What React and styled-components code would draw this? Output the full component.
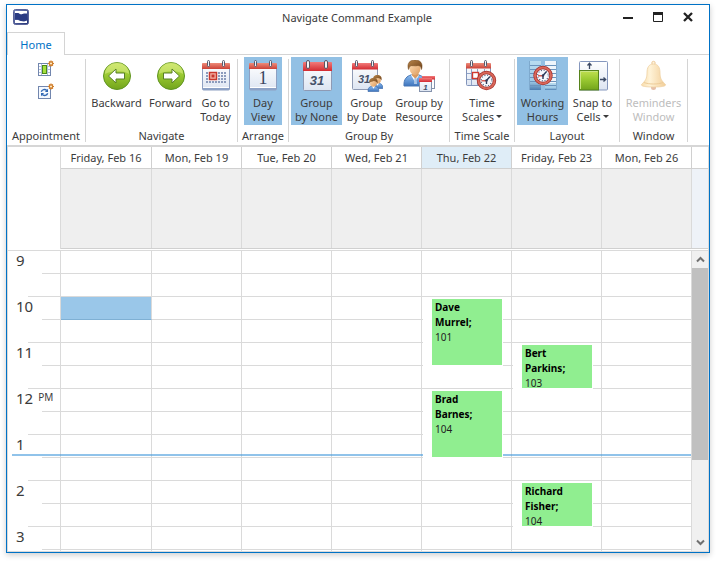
import React, { useState } from 'react';
import styled, { createGlobalStyle } from 'styled-components';

const GlobalStyle = createGlobalStyle`
    * {
        box-sizing: border-box;
    }

    body {
        margin: 0;
        background: #fff;
        color: #3b3b3b;
        font-family: "Noto Sans", "Open Sans", sans-serif;
        font-size: 11px;
    }

    button {
        font: inherit;
        color: inherit;
        border: 0;
        margin: 0;
        padding: 0;
        background: none;
    }

    svg {
        display: block;
        flex: none;
    }`;

const Page = styled.div`
        display: flex;
        height: 100vh;
        padding: 4px 6px 8px;`;

const Window = styled.main`
        display: flex;
        flex-direction: column;
        flex: 1;
        min-width: 0;
        background: #fff;
        border: 1px solid #0072c6;
        box-shadow: 0 2px 6px rgba(0, 0, 0, 0.2);`;

const TitleBar = styled.header`
        display: grid;
        grid-template-columns: 84px 1fr 92px;
        align-items: center;
        height: 27px;
        padding: 0 0 3px 6px;`;

const Title = styled.h1`
        margin: 0;
        font-size: 11px;
        font-weight: 400;
        text-align: center;`;

const WindowButtons = styled.div`
        display: flex;
        align-self: start;
        justify-content: flex-end;
        gap: 10px;
        padding: 2px 11px 0 0;`;

const WindowButton = styled.button`
        display: flex;
        align-items: center;
        justify-content: center;
        width: 20px;
        height: 20px;`;

const Tabs = styled.nav`
        display: flex;
        height: 23px;

        &::after {
        content: "";
        flex: 1;
        border-bottom: 1px solid #d4d4d4;
        }`;

const Tab = styled.button`
        width: 58px;
        border: 1px solid #d4d4d4;
        border-bottom: 0;
        color: #0072c6;`;

const Ribbon = styled.div`
        display: flex;
        height: 92px;
        padding-top: 2px;
        border-bottom: 2px solid #d6d6d6;`;

const Group = styled.section`
        display: flex;
        flex-direction: column;
        align-items: center;
        width: ${({ $width }) => $width}px;`;

const GroupItems = styled.div`
        display: flex;
        flex-direction: ${({ $stacked }) => ($stacked ? 'column' : 'row')};
        height: 71px;`;

const GroupTitle = styled.h2`
        margin: 0;
        font-size: 11px;
        font-weight: 400;
        line-height: 16px;
        white-space: nowrap;`;

const Separator = styled.div`
        width: 1px;
        margin: 2px 0 3px;
        background: #d4d4d4;`;

const LargeButton = styled.button`
        display: flex;
        flex-direction: column;
        align-items: center;
        gap: 4px;
        width: ${({ $width }) => $width}px;
        height: 68px;
        padding-top: 3px;
        line-height: 14px;
        white-space: nowrap;
        background: ${({ $active }) => ($active ? '#92c0e4' : 'transparent')};

        &:disabled {
        color: #bdbdbd;
        }`;

const SmallButton = styled.button`
        display: flex;
        justify-content: center;
        width: 22px;
        height: 23px;
        padding-top: 3px;`;

const Caret = styled.span`
        display: inline-block;
        margin-left: 2px;
        vertical-align: 3px;
        border: 3px solid transparent;
        border-top-color: #3b3b3b;
        border-bottom: 0;`;

const Scheduler = styled.section`
        display: flex;
        flex-direction: column;
        flex: 1;
        min-height: 0;
        border: 1px solid #dadada;
        border-top: 0;`;

const HeaderArea = styled.div`
        display: flex;
        padding-bottom: 1px;
        border-bottom: 1px solid #dadada;`;

const HeaderRows = styled.div`
        flex: 1;
        min-width: 0;`;

const Row = styled.div`
        display: flex;
        border-bottom: 1px solid #d0d0d0;`;

const Corner = styled.div`
        width: 53px;
        flex: none;
        border-right: 1px solid #dadada;`;

const DayHeader = styled.div`
        flex: 1 1 ${({ $first }) => ($first ? 2 : 1)}px;
        min-width: 0;
        height: 21px;
        line-height: 22px;
        text-align: center;
        white-space: nowrap;
        border-right: 1px solid #d0d0d0;
        background: ${({ $today }) => ($today ? '#dfedf7' : '#fff')};`;

const AllDayCell = styled.div`
        flex: 1 1 ${({ $first }) => ($first ? 2 : 1)}px;
        min-width: 0;
        height: 79px;
        border-right: 1px solid #dadada;
        background: #efefef;`;

const RowEnd = styled.div`
        width: 16px;
        flex: none;
        background: ${({ $shaded }) => ($shaded ? '#eef2f8' : '#fff')};`;

const Body = styled.div`
        display: flex;
        flex: 1;
        min-height: 0;`;

const TimeGrid = styled.div`
        position: relative;
        display: flex;
        flex: 1;
        min-width: 0;
        overflow: hidden;`;

const Ruler = styled.div`
        width: 53px;
        flex: none;
        border-right: 1px solid #dadada;`;

const Hour = styled.div`
        display: flex;
        gap: 5px;
        height: 46px;
        padding-left: 8px;
        line-height: 18px;
        font-size: 15px;
        background:
        linear-gradient(#dadada, #dadada) right 22px / 18px 1px no-repeat,
        linear-gradient(#dadada, #dadada) right 45px / 32px 1px no-repeat;`;

const Meridiem = styled.span`
        font-size: 10px;
        line-height: 16px;`;

const Day = styled.div`
        display: grid;
        grid-template-columns: minmax(0, 1fr);
        grid-auto-rows: 23px;
        align-content: start;
        flex: 1 1 ${({ $first }) => ($first ? 2 : 1)}px;
        min-width: 0;`;

const Slot = styled.div`
        grid-column: 1;
        grid-row: ${({ $row }) => $row};
        border-right: 1px solid #dadada;
        border-bottom: 1px solid ${({ $selected }) => ($selected ? '#7fb0d4' : '#dadada')};
        background: ${({ $selected }) => ($selected ? '#9ac7e9' : 'transparent')};`;

const Appointment = styled.article`
        grid-column: 1;
        grid-row: ${({ $row, $span }) => `${$row} / span ${$span}`};
        z-index: 2;
        margin: 0 9px 0 1px;
        padding: 2px 1px 1px 9px;
        background: #fff;`;

const AppointmentBody = styled.div`
        height: 100%;
        padding: 1px 3px 0;
        overflow: hidden;
        font-size: 10px;
        line-height: 15px;
        color: #222;
        background: #90ee90;

        strong {
        display: block;
        color: #000;
        }`;

const NowLine = styled.div`
        position: absolute;
        z-index: 1;
        top: 203px;
        left: 4px;
        right: 1px;
        height: 2px;
        background: rgba(70, 155, 220, 0.6);`;

const ScrollBar = styled.div`
        display: flex;
        flex-direction: column;
        width: 16px;
        flex: none;
        background: #f0f0f0;`;

const ScrollButton = styled.button`
        display: flex;
        align-items: center;
        justify-content: center;
        height: 17px;
        flex: none;`;

const ScrollTrack = styled.div`
        flex: 1;`;

const ScrollThumb = styled.div`
        height: 72%;
        background: #c0c0c0;`;

const Icon = ({ size = 32, children }) => (
    <svg width={size} height={size} viewBox={`0 0 ${size} ${size}`} aria-hidden="true">{children}</svg>
);

const Defs = styled.svg`
        position: absolute;`;

const IconColors = () => (
    <Defs width="0" height="0" aria-hidden="true">
        <defs>
            <linearGradient id="green" x1="0" y1="0" x2="0" y2="1">
                <stop offset="0" stopColor="#c3e052" />
                <stop offset="0.45" stopColor="#9bca32" />
                <stop offset="1" stopColor="#72a41c" />
            </linearGradient>
            <linearGradient id="red" x1="0" y1="0" x2="0" y2="1">
                <stop offset="0" stopColor="#ee8b79" />
                <stop offset="1" stopColor="#cb4137" />
            </linearGradient>
            <linearGradient id="brightRed" x1="0" y1="0" x2="0" y2="1">
                <stop offset="0" stopColor="#f27b7a" />
                <stop offset="1" stopColor="#d32a31" />
            </linearGradient>
            <linearGradient id="paper" x1="0" y1="0" x2="0" y2="1">
                <stop offset="0" stopColor="#ffffff" />
                <stop offset="1" stopColor="#dde5f2" />
            </linearGradient>
            <linearGradient id="sheet" x1="0" y1="0" x2="0" y2="1">
                <stop offset="0" stopColor="#b9dcf0" />
                <stop offset="0.7" stopColor="#a0cae6" />
                <stop offset="1" stopColor="#4c7db0" />
            </linearGradient>
            <linearGradient id="shirt" x1="0" y1="0" x2="0" y2="1">
                <stop offset="0" stopColor="#8dbdf0" />
                <stop offset="1" stopColor="#3d74bd" />
            </linearGradient>
            <linearGradient id="skin" x1="0" y1="0" x2="1" y2="1">
                <stop offset="0" stopColor="#ffe0b8" />
                <stop offset="1" stopColor="#dc9a5c" />
            </linearGradient>
            <linearGradient id="hair" x1="0" y1="0" x2="1" y2="1">
                <stop offset="0" stopColor="#b98549" />
                <stop offset="1" stopColor="#6d4119" />
            </linearGradient>
            <linearGradient id="bell" x1="0" y1="0" x2="1" y2="0">
                <stop offset="0" stopColor="#f8dcaa" />
                <stop offset="0.35" stopColor="#fff3d8" />
                <stop offset="1" stopColor="#f2ce98" />
            </linearGradient>
            <linearGradient id="navy" x1="0" y1="0" x2="1" y2="1">
                <stop offset="0" stopColor="#7d89bb" />
                <stop offset="1" stopColor="#1d2e74" />
            </linearGradient>
        </defs>
    </Defs>
);

const AppIcon = () => (
    <Icon size={16}>
        <rect x="0.5" y="0.5" width="15" height="15" rx="2" fill="url(#navy)" stroke="#59639a" />
        <path d="M2 2H14V5H10L8 6L5 4H2z" fill="#fff" />
        <path d="M2 11H5L8 12H11L14 11V14H2z" fill="#fff" />
        <path d="M2 4H5L8 5.500L11 4.500H14V11.500L11 12.500L8 12L5 10.500H2z" fill="#2a3b83" />
    </Icon>
);

const Spark = () => (
    <g stroke="#d07e2c" strokeWidth="1.200">
        <path d="M13 0.500V6.500M10 3.500H16M11 1.500L15 5.500M15 1.500L11 5.500" />
        <circle cx="13" cy="3.500" r="1.700" fill="#fdecc8" />
    </g>
);

const NewAppointmentIcon = () => (
    <Icon size={16}>
        <rect x="0.5" y="3.500" width="12" height="12" fill="#fff" stroke="#7286ae" />
        <path d="M1 6.500H12M1 9.500H12M1 12.500H12M3.500 4V15M9.500 4V15" stroke="#b3c0d8" />
        <rect x="4.500" y="5.500" width="4" height="8" fill="#a4df3c" stroke="#4b8a18" />
        <Spark />
    </Icon>
);

const RecurringIcon = () => (
    <Icon size={16}>
        <rect x="0.5" y="3.500" width="12" height="12" fill="#f5f9ff" stroke="#7286ae" />
        <path d="M3.300 8.800C4 6.600 7 5.800 8.800 7.500M9.700 10.200C9 12.500 6 13.200 4.200 11.500" fill="none" stroke="#2f67b4" strokeWidth="1.400" />
        <path d="M10 5.800V9H6.900zM3 13.200V10H6.100z" fill="#2f67b4" />
        <Spark />
    </Icon>
);

const ArrowIcon = ({ forward }) => (
    <Icon>
        <circle cx="16" cy="16" r="13.500" fill="url(#green)" stroke="#5f9420" />
        <path d="M4 14A12 11.500 0 0 1 28 14C22 10 10 11 4 14z" fill="#e4f49a" opacity="0.45" />
        <path
            d="M7.500 16L15 9V13H23.500V19H15V23z"
            fill="#fff"
            stroke="#587f28"
            strokeLinejoin="round"
            transform={forward ? 'rotate(180 16 16)' : undefined}
        />
    </Icon>
);

const Rings = ({ at }) => at.map(x => (
    <rect key={x} x={x - 1} y="0.5" width="2" height="6" rx="1" fill="#f3f3f7" stroke="#555a6c" />
));

const Sheet = () => (
    <>
        <rect x="2.500" y="3.500" width="27" height="26.500" rx="1" fill="url(#paper)" stroke="#8ea0c2" />
        <path d="M2 9V4a1 1 0 0 1 1-1H29a1 1 0 0 1 1 1V9z" fill="url(#red)" />
        <path d="M3 27.500H29V30H3z" fill="#8da2c6" />
        <path d="M3 27.500H29" stroke="#fff" />
        <Rings at={[8.5, 23.5]} />
    </>
);

const TodayIcon = () => (
    <Icon>
        <Sheet />
        <path d="M6 13H27M6 16H27M6 19H27M6 22H27" stroke="#8c9cbd" strokeWidth="2" strokeDasharray="2 1" />
        <rect x="8" y="11" width="10" height="10" fill="#f8fafd" />
        <rect x="9.500" y="12.500" width="7" height="7" fill="#f4b5a8" stroke="#c8372d" strokeWidth="1.500" />
        <rect x="11.500" y="14.500" width="3" height="3" fill="#c8372d" />
    </Icon>
);

const DayIcon = () => (
    <Icon>
        <Sheet />
        <text x="16" y="24" textAnchor="middle" fontFamily="Liberation Serif, serif" fontSize="18" fill="#3a4560">1</text>
    </Icon>
);

const MonthIcon = () => (
    <Icon>
        <rect x="2.500" y="2.500" width="28" height="28" rx="1" fill="url(#paper)" stroke="#8e9ab4" />
        <path d="M2 11V3a1 1 0 0 1 1-1H30a1 1 0 0 1 1 1V11z" fill="url(#brightRed)" />
        <rect x="5.500" y="0.500" width="3" height="8" rx="1.500" fill="#f6f6f8" stroke="#5b5360" />
        <rect x="23.500" y="0.500" width="3" height="8" rx="1.500" fill="#f6f6f8" stroke="#5b5360" />
        <text x="16" y="25" textAnchor="middle" fontFamily="Liberation Sans, sans-serif" fontSize="13" fontWeight="700" fontStyle="italic" fill="#46526a">31</text>
    </Icon>
);

const SmallPerson = () => (
    <>
        <path d="M0 14C0 10.500 2.500 9 6 9S12 10.500 12 14V15H0z" fill="url(#shirt)" stroke="#3a68a8" strokeWidth="0.700" />
        <path d="M4.500 9L6 12L8 9z" fill="#fff" />
        <ellipse cx="6" cy="5.500" rx="3.800" ry="4.200" fill="url(#skin)" />
        <path d="M1.500 6C0.500 1.500 3 0 6 0S11.500 1.500 10.500 6C9.500 3.500 8 3.500 6.500 3.200C4.500 4.300 2.500 3.500 1.500 6z" fill="url(#hair)" />
    </>
);

const ByDateIcon = () => (
    <Icon>
        <rect x="1.500" y="3.500" width="25" height="26" rx="1" fill="url(#paper)" stroke="#8e9ab4" />
        <path d="M1 9.500V4a1 1 0 0 1 1-1H26a1 1 0 0 1 1 1V9.500z" fill="url(#brightRed)" />
        <Rings at={[5.5, 21.5]} />
        <text x="13" y="23" textAnchor="middle" fontFamily="Liberation Sans, sans-serif" fontSize="11" fontWeight="700" fontStyle="italic" fill="#46526a">31</text>
        <g transform="translate(21 15) scale(0.9)"><SmallPerson /></g>
        <g transform="translate(17 18) scale(0.9)"><SmallPerson /></g>
    </Icon>
);

const ByResourceIcon = () => (
    <Icon>
        <path d="M1 26C0.500 19 4 16 8 15H16C20 16 22 19 22 26z" fill="url(#shirt)" stroke="#4776b5" />
        <path d="M8 15L12 22L16 15z" fill="#fff" />
        <path d="M11.500 17H13.500L14 24H11z" fill="#a9c4e6" />
        <path d="M9 12H15.500V15.500L12.200 18.500L9 15.500z" fill="#d99a5e" />
        <ellipse cx="12" cy="8.500" rx="5.500" ry="6.500" fill="url(#skin)" />
        <path d="M5.500 9.500C3.500 3 7 0 12 0S20.500 3 18.500 9.500C18 7 17 5.500 15 5.500C12 6.500 8.500 5 7.200 6C6.400 7 6.200 8 5.500 9.500z" fill="url(#hair)" stroke="#704419" strokeWidth="0.500" />
        <rect x="19.500" y="16.500" width="12" height="12" fill="#fff" stroke="#8593ad" />
        <path d="M19 16H32V19.500H19z" fill="url(#brightRed)" />
        <rect x="16.500" y="18.500" width="12" height="13" fill="url(#paper)" stroke="#8593ad" />
        <path d="M16 18H29V22H16z" fill="url(#brightRed)" />
        <text x="22.500" y="30" textAnchor="middle" fontFamily="Liberation Sans, sans-serif" fontSize="8" fontWeight="700" fontStyle="italic" fill="#3f4d68">1</text>
    </Icon>
);

const Clock = ({ x, y }) => (
    <g transform={`translate(${x} ${y})`}>
        <circle r="8" fill="#f6f9fe" stroke="#a32f2a" strokeWidth="3.400" />
        <circle r="8" fill="none" stroke="#d9675a" strokeWidth="2" />
        <circle r="5.300" fill="none" stroke="#4e5d7d" strokeWidth="1.200" strokeDasharray="1 1.776" />
        <path d="M0 0L3.300 -3.800M0 0V3.500" stroke="#2d3b5c" strokeWidth="1.400" />
        <path d="M0.500 0.300H-5" stroke="#d03a30" strokeWidth="1.200" />
        <circle r="1.200" fill="#2d3b5c" />
    </g>
);

const TimeScalesIcon = () => (
    <Icon>
        <rect x="0.5" y="3.500" width="24" height="22" rx="1" fill="url(#paper)" stroke="#8294ba" />
        <path d="M1 13.500H24M1 19.500H24M5.500 9V25M11.500 9V25M18.500 9V25" stroke="#8fa3c8" />
        <path d="M0 8.500V4a1 1 0 0 1 1-1H24a1 1 0 0 1 1 1V8.500z" fill="url(#red)" />
        <rect x="6.500" y="12.500" width="6" height="6" fill="#fff" stroke="#d2382e" strokeWidth="1.400" />
        <Rings at={[5.5, 19.5]} />
        <Clock x={20.5} y={20.5} />
    </Icon>
);

const WorkingHoursIcon = () => (
    <Icon>
        <rect x="2" y="1" width="12" height="29" fill="url(#sheet)" />
        <rect x="18" y="1" width="12" height="29" fill="#eef5fb" />
        <path d="M18 23H30V30H18z" fill="url(#sheet)" />
        <path d="M2 5.500H14M2 9.500H14M2 13.500H14M2 17.500H14M2 21.500H14M2 25.500H14M18 5.500H30M18 9.500H30M18 13.500H30M18 17.500H30M18 21.500H30M18 25.500H30" stroke="#6b94bd" />
        <path d="M2.500 1V30M29.500 1V30" stroke="#7ea9cd" />
        <Clock x={16} y={15.5} />
    </Icon>
);

const SnapIcon = () => (
    <Icon>
        <rect x="2.500" y="1.500" width="28" height="28.500" rx="1" fill="url(#paper)" stroke="#8597bd" />
        <rect x="2.500" y="10.500" width="19" height="19.500" fill="url(#green)" stroke="#56831c" />
        <path d="M3.500 29V11.500H20.500" fill="none" stroke="#cbe685" />
        <path d="M12.500 9V3.500M10.500 5.500L12.500 3.300L14.500 5.500M23 19.500H28.500M26.500 17.500L28.700 19.500L26.500 21.500" fill="none" stroke="#3b4964" strokeWidth="1.300" />
    </Icon>
);

const BellIcon = () => (
    <Icon>
        <circle cx="15.500" cy="27.500" r="2.500" fill="#e5bfa8" />
        <circle cx="15.500" cy="3" r="1.700" fill="#fff4dd" stroke="#edcb9c" />
        <path d="M15.500 4C20.500 4 22 8 22 13C22 19 24 21 27.500 24.500C28 26 25 27 15.500 27S3 26 3.500 24.500C7 21 9 19 9 13C9 8 10.500 4 15.500 4z" fill="url(#bell)" stroke="#efd0a2" strokeWidth="0.800" />
        <path d="M6 22.500C11 24.500 20 24.500 25 22.500" fill="none" stroke="#edcc98" />
    </Icon>
);

const Chevron = ({ down }) => (
    <svg width="9" height="7" viewBox="0 0 9 7" aria-hidden="true">
        <path d={down ? 'M1 1.500L4.500 5L8 1.500' : 'M1 5.500L4.500 2L8 5.500'} fill="none" stroke="#707070" strokeWidth="2" />
    </svg>
);

const ribbonGroups = [
    {
        title: 'Navigate',
        width: 151,
        items: [
            { lines: ['Backward'], icon: <ArrowIcon />, width: 56 },
            { lines: ['Forward'], icon: <ArrowIcon forward />, width: 52 },
            { lines: ['Go to', 'Today'], icon: <TodayIcon />, width: 38 },
        ],
    },
    {
        title: 'Arrange',
        width: 50,
        items: [{ lines: ['Day', 'View'], icon: <DayIcon />, width: 38, active: true }],
    },
    {
        title: 'Group By',
        width: 160,
        items: [
            { lines: ['Group', 'by None'], icon: <MonthIcon />, width: 51, active: true },
            { lines: ['Group', 'by Date'], icon: <ByDateIcon />, width: 49 },
            { lines: ['Group by', 'Resource'], icon: <ByResourceIcon />, width: 56 },
        ],
    },
    {
        title: 'Time Scale',
        width: 64,
        items: [{ lines: ['Time', 'Scales'], icon: <TimeScalesIcon />, width: 48, menu: true }],
    },
    {
        title: 'Layout',
        width: 104,
        items: [
            { lines: ['Working', 'Hours'], icon: <WorkingHoursIcon />, width: 51, active: true },
            { lines: ['Snap to', 'Cells'], icon: <SnapIcon />, width: 49, menu: true },
        ],
    },
    {
        title: 'Window',
        width: 67,
        items: [{ lines: ['Reminders', 'Window'], icon: <BellIcon />, width: 62, disabled: true }],
    },
];

const days = [
    { label: 'Friday, Feb 16' },
    { label: 'Mon, Feb 19' },
    { label: 'Tue, Feb 20' },
    { label: 'Wed, Feb 21' },
    {
        label: 'Thu, Feb 22',
        today: true,
        appointments: [
            { first: 'Dave', last: 'Murrel', room: 101, row: 3, span: 3 },
            { first: 'Brad', last: 'Barnes', room: 104, row: 7, span: 3 },
        ],
    },
    {
        label: 'Friday, Feb 23',
        appointments: [
            { first: 'Bert', last: 'Parkins', room: 103, row: 5, span: 2 },
            { first: 'Richard', last: 'Fisher', room: 104, row: 11, span: 2 },
        ],
    },
    { label: 'Mon, Feb 26' },
];

const hours = [9, 10, 11, 12, 1, 2, 3];
const slots = Array.from({ length: hours.length * 2 }, (_, i) => i + 1);

const App = () => {
    const [selected, setSelected] = useState('0-3');

    return (
        <Page>
            <GlobalStyle />
            <IconColors />
            <Window>
                <TitleBar>
                    <AppIcon />
                    <Title>Navigate Command Example</Title>
                    <WindowButtons>
                        <WindowButton aria-label="Minimize">
                            <svg width="10" height="10"><path d="M0 6H10" stroke="#222" strokeWidth="2" /></svg>
                        </WindowButton>
                        <WindowButton aria-label="Maximize">
                            <svg width="10" height="10"><path d="M0.500 1V9.500H9.500V1" fill="none" stroke="#222" /><path d="M0 1.500H10" stroke="#222" strokeWidth="3" /></svg>
                        </WindowButton>
                        <WindowButton aria-label="Close">
                            <svg width="10" height="10"><path d="M1 1L9 9M9 1L1 9" stroke="#222" strokeWidth="2.300" /></svg>
                        </WindowButton>
                    </WindowButtons>
                </TitleBar>
                <Tabs>
                    <Tab>Home</Tab>
                </Tabs>
                <Ribbon>
                    <Group $width={78}>
                        <GroupItems $stacked>
                            <SmallButton aria-label="New appointment"><NewAppointmentIcon /></SmallButton>
                            <SmallButton aria-label="New recurring appointment"><RecurringIcon /></SmallButton>
                        </GroupItems>
                        <GroupTitle>Appointment</GroupTitle>
                    </Group>
                    <Separator />
                    {ribbonGroups.map(group => (
                        <React.Fragment key={group.title}>
                            <Group $width={group.width}>
                                <GroupItems>
                                    {group.items.map(item => (
                                        <LargeButton key={item.lines.join(' ')} $width={item.width} $active={item.active} disabled={item.disabled}>
                                            {item.icon}
                                            <span>
                                                {item.lines[0]}
                                                {item.lines[1] && <><br />{item.lines[1]}</>}
                                                {item.menu && <Caret />}
                                            </span>
                                        </LargeButton>
                                    ))}
                                </GroupItems>
                                <GroupTitle>{group.title}</GroupTitle>
                            </Group>
                            <Separator />
                        </React.Fragment>
                    ))}
                </Ribbon>
                <Scheduler>
                    <HeaderArea>
                        <Corner />
                        <HeaderRows>
                            <Row>
                                {days.map((day, index) => (
                                    <DayHeader key={day.label} $first={index === 0} $today={day.today}>{day.label}</DayHeader>
                                ))}
                                <RowEnd />
                            </Row>
                            <Row>
                                {days.map((day, index) => <AllDayCell key={day.label} $first={index === 0} />)}
                                <RowEnd $shaded />
                            </Row>
                        </HeaderRows>
                    </HeaderArea>
                    <Body>
                        <TimeGrid>
                            <Ruler>
                                {hours.map(hour => (
                                    <Hour key={hour}>
                                        {hour}
                                        {hour === 12 && <Meridiem>PM</Meridiem>}
                                    </Hour>
                                ))}
                            </Ruler>
                            {days.map((day, index) => (
                                <Day key={day.label} $first={index === 0}>
                                    {slots.map(row => (
                                        <Slot
                                            key={row}
                                            $row={row}
                                            $selected={selected === `${index}-${row}`}
                                            onClick={() => setSelected(`${index}-${row}`)}
                                        />
                                    ))}
                                    {(day.appointments || []).map(item => (
                                        <Appointment key={item.row} $row={item.row} $span={item.span}>
                                            <AppointmentBody>
                                                <strong>{item.first}<br />{item.last};</strong>
                                                {item.room}
                                            </AppointmentBody>
                                        </Appointment>
                                    ))}
                                </Day>
                            ))}
                            <NowLine />
                        </TimeGrid>
                        <ScrollBar>
                            <ScrollButton aria-label="Scroll up"><Chevron /></ScrollButton>
                            <ScrollTrack><ScrollThumb /></ScrollTrack>
                            <ScrollButton aria-label="Scroll down"><Chevron down /></ScrollButton>
                        </ScrollBar>
                    </Body>
                </Scheduler>
            </Window>
        </Page>
    );
}

export default App;
